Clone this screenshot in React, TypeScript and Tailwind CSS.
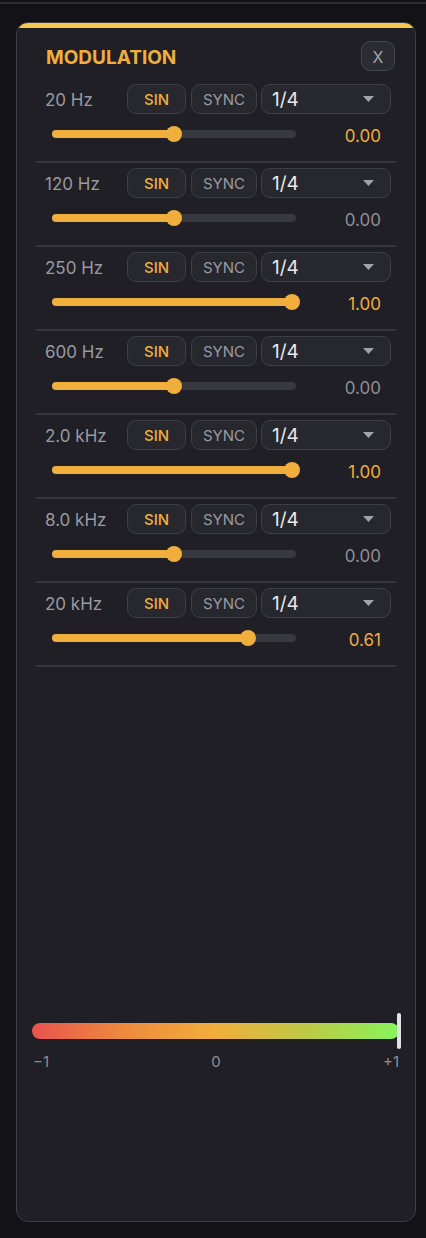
import React from "react";

type Band = { label: string; value: number; active: boolean };

const bands: Band[] = [
  { label: "20 Hz", value: 0, active: true },
  { label: "120 Hz", value: 0, active: false },
  { label: "250 Hz", value: 1, active: true },
  { label: "600 Hz", value: 0, active: false },
  { label: "2.0 kHz", value: 1, active: true },
  { label: "8.0 kHz", value: 0, active: false },
  { label: "20 kHz", value: 0.61, active: true },
];

const TRACK = 244;

function Slider({ value }: { value: number }) {
  // value runs -1..1, thumb stays inside the track ends
  const frac = (value + 1) / 2;
  const center = Math.max(8, Math.min(frac * TRACK, TRACK - 4));
  return (
    <div className="relative ml-[16px] h-[16px] w-[244px]">
      <div className="absolute left-0 top-[4px] h-[8px] w-full rounded-full bg-[#38383f]" />
      <div
        className="absolute left-0 top-[4px] h-[8px] rounded-full bg-[#f0ae3c]"
        style={{ width: center }}
      />
      <div
        className="absolute top-0 h-[16px] w-[16px] rounded-full bg-[#f0ae3c]"
        style={{ left: center - 8 }}
      />
    </div>
  );
}

function BandRow({ band }: { band: Band }) {
  return (
    <div className="pt-[5px]">
      <div className="flex h-[30px] items-center pl-[9px] pr-[5px]">
        <div className="w-[82px] translate-y-[2px] text-[17px] text-[#9a9aa2]">{band.label}</div>
        <button className="h-[30px] w-[59px] rounded-[9px] border border-[#3e3e46] bg-[#27272e] pt-[2px] text-[15px] font-medium text-[#f0ae3c]">
          SIN
        </button>
        <button className="ml-[5px] h-[30px] w-[66px] rounded-[9px] border border-[#3e3e46] bg-[#27272e] pt-[2px] text-[15px] text-[#9a9aa2]">
          SYNC
        </button>
        <div className="ml-[4px] flex h-[30px] flex-1 items-center justify-between rounded-[9px] border border-[#3e3e46] bg-[#27272e] pl-[10px] pr-[16px]">
          <span className="translate-y-[1px] text-[19px] text-[#e9e9ec]">1/4</span>
          <svg width="11" height="6" viewBox="0 0 11 6">
            <path d="M0 0h11L5.5 6z" fill="#a2a2aa" />
          </svg>
        </div>
      </div>
      <div className="mt-[12px] flex items-center justify-between pr-[15px]">
        <Slider value={band.value} />
        <span
          className={
            band.active
              ? "translate-y-[2px] text-[17px] leading-[16px] text-[#f0ae3c]"
              : "translate-y-[2px] text-[17px] leading-[16px] text-[#8e8e96]"
          }
        >
          {band.value.toFixed(2)}
        </span>
      </div>
      <div className="mt-[19px] h-[2px] bg-[#36363d]" />
    </div>
  );
}

export default function App() {
  return (
    <div className="h-[1238px] w-[426px] overflow-hidden bg-[#131217] font-['Inter',sans-serif]">
      <div className="h-[2px]" />
      <div className="h-[2px] bg-[#2c2c32]" />
      <div className="mx-4 mt-[18px] flex h-[1200px] w-[400px] flex-col overflow-hidden rounded-[12px] border border-[#3d3d45] bg-[#1f1f25]">
        <div className="h-[5px] bg-[#f6c84e]" />

        <div className="mt-[13px] flex items-center justify-between pl-[29px] pr-[20px]">
          <h2 className="translate-y-[2px] text-[19px] font-bold text-[#f0ae3c]">MODULATION</h2>
          <button className="flex h-[30px] w-[34px] items-center justify-center rounded-[9px] border border-[#45454d] bg-[#2b2b32] pt-[2px] text-[16px] text-[#a5a5ad]">
            X
          </button>
        </div>

        <div className="mt-[8px] px-[19px]">
          {bands.map((b) => (
            <BandRow key={b.label} band={b} />
          ))}
        </div>

        {/* bipolar output meter */}
        <div className="mt-[346px] pl-[15px] pr-[14px]">
          <div className="relative h-[36px]">
            <div className="absolute left-0 right-[2px] top-[10px] h-[16px] rounded-full bg-[linear-gradient(to_right,#e8544f,#ee8a3e_25%,#f1ae3c_50%,#bfc946_75%,#86f55c)]" />
            <div className="absolute right-0 top-0 h-[36px] w-[4px] rounded-full bg-[#e3e3e6]" />
          </div>
          <div className="mt-[2px] flex justify-between pl-[1px] pr-[2px] text-[15px] text-[#8e8e96]">
            <span>−1</span>
            <span>0</span>
            <span>+1</span>
          </div>
        </div>
      </div>
    </div>
  );
}
